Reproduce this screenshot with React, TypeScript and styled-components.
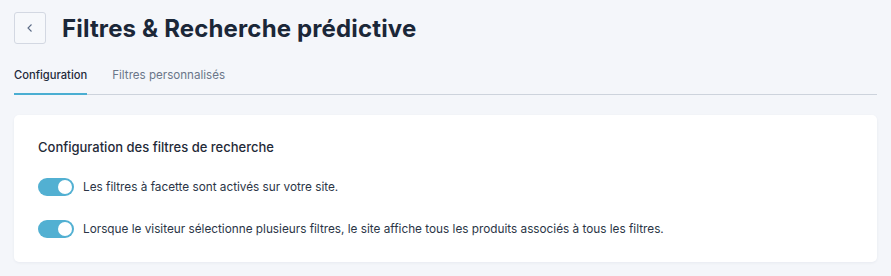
import React from "react";
import styled, { createGlobalStyle } from "styled-components";

const Global = createGlobalStyle`
  html, body { margin: 0; padding: 0; background: #f4f6fa; }
  body { font-family: "Inter", "Open Sans", sans-serif; color: #1e2a3a; }
  * { box-sizing: border-box; }
`;

const Page = styled.div`
  padding: 12px 14px 14px 14px;
  display: flex;
  flex-direction: column;
`;

const Header = styled.div`
  display: flex;
  align-items: center;
  gap: 16px;
  height: 32px;
`;

const BackButton = styled.button`
  width: 32px;
  height: 32px;
  border: 1px solid #d3d8e2;
  border-radius: 3px;
  background: #f6f8fb;
  display: flex;
  align-items: center;
  justify-content: center;
  padding: 0;
  color: #5b6b86;
`;

const Title = styled.h1`
  margin: 0;
  font-size: 24px;
  font-weight: 700;
  color: #1b2738;
  letter-spacing: 0.15px;
`;

const Tabs = styled.div`
  display: flex;
  gap: 25px;
  margin-top: 20px;
  border-bottom: 1px solid #cdd3dc;
`;

const Tab = styled.div<{ $active?: boolean }>`
  font-size: ${(p) => (p.$active ? "11.2px" : "11.6px")};
  font-weight: ${(p) => (p.$active ? 500 : 400)};
  color: ${(p) => (p.$active ? "#1f2a3a" : "#6b7689")};
  padding: 4px 0 11px;
  margin-bottom: -1px;
  border-bottom: 2px solid ${(p) => (p.$active ? "#4aaed2" : "transparent")};
`;

const Card = styled.div`
  margin-top: 20px;
  background: #ffffff;
  border-radius: 5px;
  box-shadow: 0 1px 3px rgba(30, 50, 90, 0.06);
  padding: 23px 24px 24px;
  display: flex;
  flex-direction: column;
`;

const CardTitle = styled.h2`
  margin: 0;
  font-size: 13px;
  font-weight: 500;
  color: #1f2a38;
  line-height: 18px;
`;

const Rows = styled.div`
  display: flex;
  flex-direction: column;
  gap: 24px;
  margin-top: 22px;
`;

const Row = styled.label`
  display: flex;
  align-items: center;
  gap: 9px;
`;

const Switch = styled.span<{ $on?: boolean }>`
  position: relative;
  width: 36px;
  height: 18px;
  border-radius: 9px;
  background: ${(p) => (p.$on ? "#52b0d2" : "#c9d0da")};
  flex: none;
  &::after {
    content: "";
    position: absolute;
    top: 2px;
    left: ${(p) => (p.$on ? "20px" : "2px")};
    width: 14px;
    height: 14px;
    border-radius: 50%;
    background: #fff;
  }
`;

const RowText = styled.span`
  font-size: 11.78px;
  color: #2b3546;
`;

export default function App() {
  return (
    <>
      <Global />
      <Page>
        <Header>
          <BackButton aria-label="Retour">
            <svg width="10" height="10" viewBox="0 0 10 10" fill="none">
              <path d="M6.5 1.5 L3 5 L6.5 8.5" stroke="#5b6b86" strokeWidth="1.1" />
            </svg>
          </BackButton>
          <Title>Filtres &amp; Recherche prédictive</Title>
        </Header>
        <Tabs>
          <Tab $active>Configuration</Tab>
          <Tab>Filtres personnalisés</Tab>
        </Tabs>
        <Card>
          <CardTitle>Configuration des filtres de recherche</CardTitle>
          <Rows>
            <Row>
              <Switch $on />
              <RowText>Les filtres à facette sont activés sur votre site.</RowText>
            </Row>
            <Row>
              <Switch $on />
              <RowText>
                Lorsque le visiteur sélectionne plusieurs filtres, le site affiche tous les produits associés à tous les filtres.
              </RowText>
            </Row>
          </Rows>
        </Card>
      </Page>
    </>
  );
}
